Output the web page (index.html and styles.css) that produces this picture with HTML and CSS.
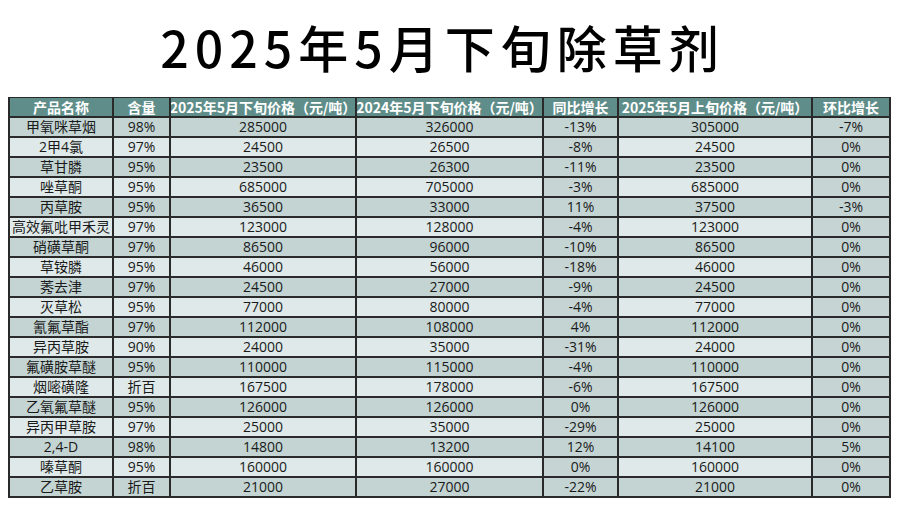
FILE: index.html
```html
<!DOCTYPE html>
<html lang="zh">
<head>
<meta charset="utf-8">
<title>2025年5月下旬除草剂</title>
<link rel="stylesheet" href="styles.css">
</head>
<body>
<h1 class="title">2025年5月下旬除草剂</h1>
<div class="table">
  <div class="row head">
    <div class="c">产品名称</div><div class="c">含量</div><div class="c">2025年5月下旬价格（元/吨）</div><div class="c">2024年5月下旬价格（元/吨）</div><div class="c">同比增长</div><div class="c">2025年5月上旬价格（元/吨）</div><div class="c">环比增长</div>
  </div>
  <div class="row dark"><div class="c">甲氧咪草烟</div><div class="c">98%</div><div class="c">285000</div><div class="c">326000</div><div class="c k">-13%</div><div class="c">305000</div><div class="c k">-7%</div></div>
  <div class="row light"><div class="c">2甲4氯</div><div class="c">97%</div><div class="c">24500</div><div class="c">26500</div><div class="c k">-8%</div><div class="c">24500</div><div class="c k">0%</div></div>
  <div class="row dark"><div class="c">草甘膦</div><div class="c">95%</div><div class="c">23500</div><div class="c">26300</div><div class="c k">-11%</div><div class="c">23500</div><div class="c k">0%</div></div>
  <div class="row light"><div class="c">唑草酮</div><div class="c">95%</div><div class="c">685000</div><div class="c">705000</div><div class="c k">-3%</div><div class="c">685000</div><div class="c k">0%</div></div>
  <div class="row dark"><div class="c">丙草胺</div><div class="c">95%</div><div class="c">36500</div><div class="c">33000</div><div class="c k">11%</div><div class="c">37500</div><div class="c k">-3%</div></div>
  <div class="row light"><div class="c">高效氟吡甲禾灵</div><div class="c">97%</div><div class="c">123000</div><div class="c">128000</div><div class="c k">-4%</div><div class="c">123000</div><div class="c k">0%</div></div>
  <div class="row dark"><div class="c">硝磺草酮</div><div class="c">97%</div><div class="c">86500</div><div class="c">96000</div><div class="c k">-10%</div><div class="c">86500</div><div class="c k">0%</div></div>
  <div class="row light"><div class="c">草铵膦</div><div class="c">95%</div><div class="c">46000</div><div class="c">56000</div><div class="c k">-18%</div><div class="c">46000</div><div class="c k">0%</div></div>
  <div class="row dark"><div class="c">莠去津</div><div class="c">97%</div><div class="c">24500</div><div class="c">27000</div><div class="c k">-9%</div><div class="c">24500</div><div class="c k">0%</div></div>
  <div class="row light"><div class="c">灭草松</div><div class="c">95%</div><div class="c">77000</div><div class="c">80000</div><div class="c k">-4%</div><div class="c">77000</div><div class="c k">0%</div></div>
  <div class="row dark"><div class="c">氰氟草酯</div><div class="c">97%</div><div class="c">112000</div><div class="c">108000</div><div class="c k">4%</div><div class="c">112000</div><div class="c k">0%</div></div>
  <div class="row light"><div class="c">异丙草胺</div><div class="c">90%</div><div class="c">24000</div><div class="c">35000</div><div class="c k">-31%</div><div class="c">24000</div><div class="c k">0%</div></div>
  <div class="row dark"><div class="c">氟磺胺草醚</div><div class="c">95%</div><div class="c">110000</div><div class="c">115000</div><div class="c k">-4%</div><div class="c">110000</div><div class="c k">0%</div></div>
  <div class="row light"><div class="c">烟嘧磺隆</div><div class="c">折百</div><div class="c">167500</div><div class="c">178000</div><div class="c k">-6%</div><div class="c">167500</div><div class="c k">0%</div></div>
  <div class="row dark"><div class="c">乙氧氟草醚</div><div class="c">95%</div><div class="c">126000</div><div class="c">126000</div><div class="c k">0%</div><div class="c">126000</div><div class="c k">0%</div></div>
  <div class="row light"><div class="c">异丙甲草胺</div><div class="c">97%</div><div class="c">25000</div><div class="c">35000</div><div class="c k">-29%</div><div class="c">25000</div><div class="c k">0%</div></div>
  <div class="row dark"><div class="c">2,4-D</div><div class="c">98%</div><div class="c">14800</div><div class="c">13200</div><div class="c k">12%</div><div class="c">14100</div><div class="c k">5%</div></div>
  <div class="row light"><div class="c">嗪草酮</div><div class="c">95%</div><div class="c">160000</div><div class="c">160000</div><div class="c k">0%</div><div class="c">160000</div><div class="c k">0%</div></div>
  <div class="row dark"><div class="c">乙草胺</div><div class="c">折百</div><div class="c">21000</div><div class="c">27000</div><div class="c k">-22%</div><div class="c">21000</div><div class="c k">0%</div></div>
</div>
</body>
</html>
```
FILE: styles.css
```css
html, body {
  margin: 0;
  padding: 0;
  background: #ffffff;
}
body {
  width: 900px;
  height: 506px;
  overflow: hidden;
  font-family: "Open Sans", "Noto Sans CJK SC", sans-serif;
}
.title {
  margin: 0;
  padding: 21px 15px 0 0;
  height: 50px;
  margin-bottom: 26px;
  font-family: "Noto Sans CJK SC", sans-serif;
  font-weight: 500;
  font-size: 50px;
  line-height: 50px;
  letter-spacing: 6px;
  text-align: center;
  color: #000;
}
.table {
  margin-left: 8px;
  width: 879px;
  display: grid;
  grid-template-columns: 102px 55px 184px 185px 73px 192px 76px;
  grid-auto-rows: 18px;
  gap: 2px;
  border: 2px solid #2a2a2a;
  border-top-width: 1px;
  background: #2a2a2a;
}
.row {
  display: contents;
}
.c {
  display: flex;
  align-items: center;
  justify-content: center;
  overflow: hidden;
  white-space: nowrap;
  font-size: 14px;
  line-height: 18px;
  color: #1a1a1a;
}
.head .c {
  background: #5f8e8a;
  color: #ffffff;
  font-weight: 700;
  font-family: "Noto Sans CJK SC", "Open Sans", sans-serif;
  font-size: 14px;
  line-height: 16px;
}
.dark .c {
  background: #c3d4d3;
}
.light .c {
  background: #dfe9e9;
}
.light .c.k {
  background: #c6d5d4;
}
```
